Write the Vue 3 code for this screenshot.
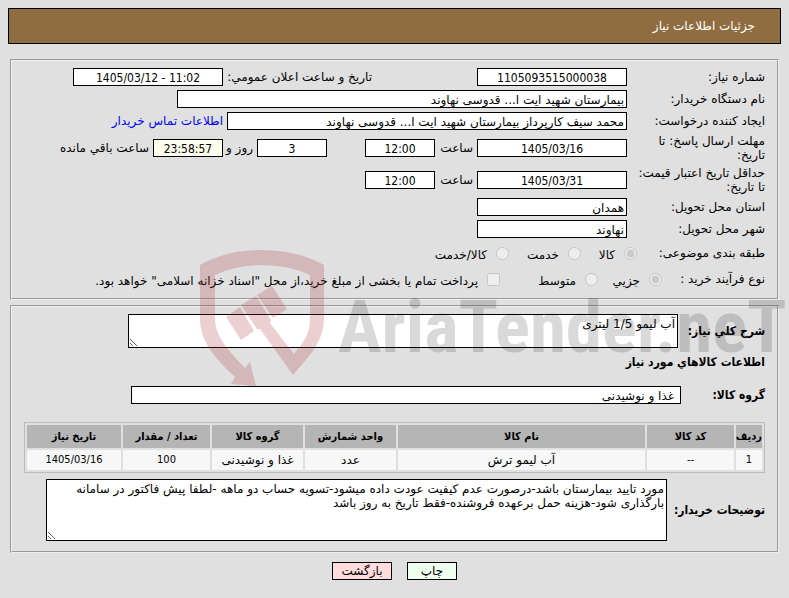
<script setup>
const items = [
  { row: '1', code: '--', name: 'آب لیمو ترش', unit: 'عدد', group: 'غذا و نوشیدنی', qty: '100', date: '1405/03/16' },
]
</script>

<template>
  <div class="page" dir="rtl">
    <header class="title">جزئیات اطلاعات نیاز</header>

    <main class="body">
      <fieldset class="panel">
        <div class="row">
          <label class="key" for="need-no">شماره نیاز:</label>
          <input id="need-no" class="box mid w150" value="1105093515000038" readonly />
          <label class="far" for="announce">تاریخ و ساعت اعلان عمومي:</label>
          <input id="announce" class="box mid w150" dir="ltr" value="1405/03/12 - 11:02" readonly />
        </div>
        <div class="row">
          <label class="key" for="org">نام دستگاه خریدار:</label>
          <input id="org" class="box w450" value="بیمارستان شهید ایت ا... قدوسی نهاوند" readonly />
        </div>
        <div class="row">
          <label class="key" for="creator">ایجاد کننده درخواست:</label>
          <input id="creator" class="box w400" value="محمد سیف کارپرداز بیمارستان شهید ایت ا... قدوسی نهاوند" readonly />
          <a class="contact" href="#">اطلاعات تماس خریدار</a>
        </div>
        <div class="row tall">
          <label class="key" for="deadline">مهلت ارسال پاسخ: تا<br />تاریخ:</label>
          <input id="deadline" class="box mid w150" value="1405/03/16" readonly />
          <label class="hour" for="deadline-time">ساعت</label>
          <input id="deadline-time" class="box mid w70" value="12:00" readonly />
          <input id="days" class="box mid w70 apart" value="3" readonly />
          <label class="days" for="days">روز و</label>
          <input id="left" class="box mid w70 timer" value="23:58:57" readonly />
          <label for="left">ساعت باقي مانده</label>
        </div>
        <div class="row tall">
          <label class="key" for="valid">حداقل تاریخ اعتبار قیمت:<br />تا تاریخ:</label>
          <input id="valid" class="box mid w150" value="1405/03/31" readonly />
          <label class="hour" for="valid-time">ساعت</label>
          <input id="valid-time" class="box mid w70" value="12:00" readonly />
        </div>
        <div class="row">
          <label class="key" for="province">استان محل تحویل:</label>
          <input id="province" class="box w150" value="همدان" readonly />
        </div>
        <div class="row">
          <label class="key" for="city">شهر محل تحویل:</label>
          <input id="city" class="box w150" value="نهاوند" readonly />
        </div>
        <div class="row choices first">
          <span class="key">طبقه بندی موضوعی:</span>
          <label class="opt w56"><input type="radio" name="subject" checked disabled /><span>کالا</span></label>
          <label class="opt w72"><input type="radio" name="subject" disabled /><span>خدمت</span></label>
          <label class="opt"><input type="radio" name="subject" disabled /><span>کالا/خدمت</span></label>
        </div>
        <div class="row choices second">
          <span class="key">نوع فرآیند خرید :</span>
          <label class="opt w64"><input type="radio" name="process" checked disabled /><span>جزیي</span></label>
          <label class="opt w98"><input type="radio" name="process" disabled /><span>متوسط</span></label>
          <label class="opt"><input type="checkbox" disabled /><span>پرداخت تمام یا بخشی از مبلغ خرید،از محل "اسناد خزانه اسلامی" خواهد بود.</span></label>
        </div>
      </fieldset>

      <fieldset class="panel goods">
        <div class="line">
          <label class="strong w83" for="summary">شرح کلي نیاز:</label>
          <textarea id="summary" class="area summary" readonly>آب لیمو 1/5 لیتری</textarea>
        </div>
        <h2 class="heading">اطلاعات کالاهاي مورد نیاز</h2>
        <div class="line group">
          <label class="strong w80" for="group">گروه کالا:</label>
          <input id="group" class="box group-box" value="غذا و نوشیدنی" readonly />
        </div>
        <table class="items">
          <colgroup>
            <col class="c-row" /><col class="c-code" /><col /><col class="c-mid" /><col class="c-mid" /><col class="c-qty" /><col class="c-date" />
          </colgroup>
          <thead>
            <tr>
              <th>ردیف</th><th>کد کالا</th><th>نام کالا</th><th>واحد شمارش</th><th>گروه کالا</th><th>تعداد / مقدار</th><th>تاریخ نیاز</th>
            </tr>
          </thead>
          <tbody>
            <tr v-for="item in items" :key="item.row">
              <td class="num">{{ item.row }}</td><td class="num">{{ item.code }}</td><td>{{ item.name }}</td><td>{{ item.unit }}</td><td>{{ item.group }}</td><td class="num">{{ item.qty }}</td><td class="num">{{ item.date }}</td>
            </tr>
          </tbody>
        </table>
        <div class="line">
          <label class="strong w94" for="notes">توضیحات خریدار:</label>
          <textarea id="notes" class="area notes" readonly>مورد تایید بیمارستان باشد-درصورت عدم کیفیت عودت داده میشود-تسویه حساب دو ماهه -لطفا پیش فاکتور در سامانه بارگذاری شود-هزینه حمل برعهده فروشنده-فقط تاریخ به روز باشد</textarea>
        </div>
      </fieldset>
    </main>

    <footer class="actions">
      <button class="btn print" type="button">چاپ</button>
      <button class="btn back" type="button">بازگشت</button>
    </footer>

    <svg class="watermark" width="592" height="150" viewBox="0 0 592 150" direction="ltr" aria-hidden="true">
      <g fill="#ac3237" fill-opacity="0.23">
        <path d="M3 20Q30 5 65 5T127 20V73C127 97 112 111 96 130L63 84H60L44 60L59 51L74 75L73 78L97 109C108 96 113 88 113 73V30Q92 20 65 20T18 30V73C18 92 32 106 48 123L53 117L59 141L34 139L38 132C18 113 3 97 3 73Z" />
        <path d="M29 72L43 62L57 86L44 95ZM60 50L75 41L90 64L76 73Z" />
      </g>
      <text class="brand" x="141" y="107">AriaTender.neT</text>
    </svg>
  </div>
</template>

<style>
body {
  margin: 0;
  background: #e0e0e0;
}
</style>

<style scoped>
.page {
  position: relative;
  min-height: 100vh;
  box-sizing: border-box;
  padding: 8px 8px 0;
  overflow: hidden;
  color: #000;
  font: 12px/14px "DejaVu Sans", sans-serif;
}
.title {
  display: flex;
  align-items: center;
  height: 34px;
  padding: 0 25px;
  border: 1px solid #000;
  background: #8f6d40;
  color: #fff;
}
.body {
  display: flex;
  flex-direction: column;
  gap: 5px;
  padding: 15px 2px 0;
}
.panel {
  display: flex;
  flex-direction: column;
  gap: 4px;
  min-width: 0;
  margin: 0;
  padding: 7px 12px 8px;
  border: 2px groove #eee;
}
.row {
  display: flex;
  align-items: center;
  gap: 4px;
  min-height: 18px;
  white-space: nowrap;
}
.tall {
  min-height: 28px;
}
.key {
  width: 134px;
  flex: none;
}
.far {
  width: 145px;
  margin-right: 101px;
}
.hour {
  width: 34px;
}
.days {
  width: 26px;
}
.apart {
  margin-right: 34px;
}
.contact {
  color: #00f;
  text-decoration: none;
}
.box {
  box-sizing: border-box;
  height: 18px;
  padding: 1px 2px 0;
  border: 1px solid #000;
  background: #fff;
  color: #000;
  font: inherit;
}
.mid {
  font-family: "DejaVu Sans Condensed", "DejaVu Sans", sans-serif;
  text-align: center;
}
.timer {
  background: #ffffee;
}
.w150 { width: 150px; }
.w450 { width: 450px; }
.w400 { width: 400px; }
.w70 { width: 70px; }
.choices {
  min-height: 22px;
  gap: 0;
}
.first .key { width: 126px; }
.second .key { width: 101px; }
.opt {
  display: flex;
  align-items: center;
  gap: 9px;
}
.opt input {
  margin: 0 2px 0 0;
}
.opt span {
  padding-top: 3px;
}
.w56 { width: 56px; }
.w72 { width: 72px; }
.w64 { width: 64px; }
.w98 { width: 98px; }
.goods {
  gap: 6px;
  padding: 7px 12px 10px;
}
.line {
  display: flex;
  align-items: center;
  gap: 4px;
}
.strong,
.heading {
  margin: 0;
  font-family: "DejaVu Sans Condensed", "DejaVu Sans", sans-serif;
  font-size: 12px;
  font-weight: bold;
  white-space: nowrap;
}
.heading {
  padding-top: 1px;
}
.w83 { width: 83px; }
.w80 { width: 80px; }
.w94 { width: 94px; }
.group {
  padding: 11px 0 12px;
}
.group-box {
  width: 550px;
  padding: 1px 6px 0;
}
.area {
  box-sizing: border-box;
  margin: 0;
  padding: 2px;
  border: 1px solid #000;
  background: #fff;
  color: #000;
  font: inherit;
  overflow: hidden;
}
.summary {
  width: 550px;
  height: 34px;
}
.notes {
  width: 621px;
  height: 62px;
}
.items {
  width: 100%;
  table-layout: fixed;
  border: 1px solid #bbb;
  border-spacing: 2px;
  text-align: center;
}
.items th,
.items td {
  height: 20px;
  padding: 0;
  background: #f7f7f7;
  white-space: nowrap;
}
.items th {
  height: 23px;
  background: #b5b5b5;
}
.items th,
.items .num {
  font-family: "DejaVu Sans Condensed", "DejaVu Sans", sans-serif;
  font-size: 11px;
}
.c-row { width: 26px; }
.c-code { width: 87px; }
.c-mid { width: 91px; }
.c-qty { width: 87px; }
.c-date { width: 94px; }
.actions {
  display: flex;
  justify-content: center;
  gap: 15px;
  padding-top: 9px;
}
.btn {
  height: 18px;
  padding: 0;
  border: 1px solid #000;
  font: inherit;
}
.print {
  width: 50px;
  background: #eeffee;
}
.back {
  width: 60px;
  background: #ffdddd;
}
.watermark {
  position: absolute;
  left: 197px;
  top: 245px;
  pointer-events: none;
}
.brand {
  font: bold 73px "Liberation Sans Narrow", "Roboto Condensed", Roboto, sans-serif;
  fill: #000;
  fill-opacity: 0.15;
}
</style>
